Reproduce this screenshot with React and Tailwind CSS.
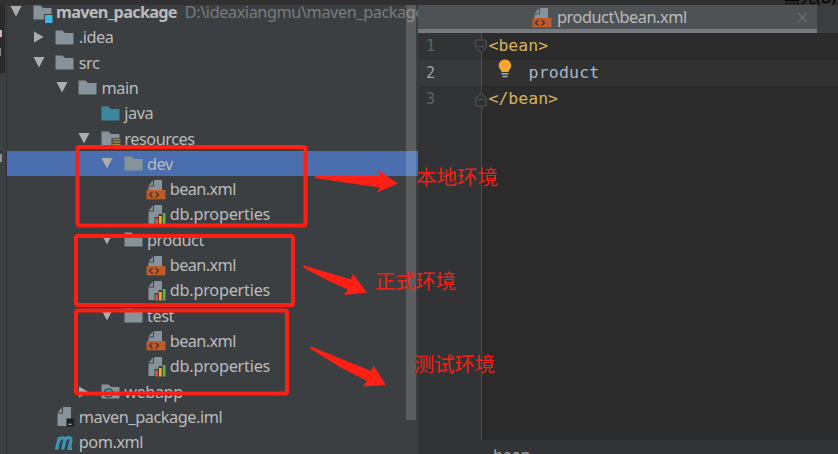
import React from 'react';

const TREE = [
  { level: 0, arrow: 'down', icon: 'module', label: 'maven_package', bold: true, hint: 'D:\\ideaxiangmu\\maven_package' },
  { level: 1, arrow: 'right', icon: 'folder', label: '.idea' },
  { level: 1, arrow: 'down', icon: 'folder', label: 'src' },
  { level: 2, arrow: 'down', icon: 'folder', label: 'main' },
  { level: 3, icon: 'source', label: 'java' },
  { level: 3, arrow: 'down', icon: 'resources', label: 'resources' },
  { level: 4, arrow: 'down', icon: 'folder', label: 'dev', selected: true },
  { level: 5, icon: 'xml', label: 'bean.xml' },
  { level: 5, icon: 'properties', label: 'db.properties' },
  { level: 4, arrow: 'down', icon: 'folder', label: 'product' },
  { level: 5, icon: 'xml', label: 'bean.xml' },
  { level: 5, icon: 'properties', label: 'db.properties' },
  { level: 4, arrow: 'down', icon: 'folder', label: 'test' },
  { level: 5, icon: 'xml', label: 'bean.xml' },
  { level: 5, icon: 'properties', label: 'db.properties' },
  { level: 3, arrow: 'right', icon: 'web', label: 'webapp' },
  { level: 1, icon: 'iml', label: 'maven_package.iml' },
  { level: 1, icon: 'maven', label: 'pom.xml' },
];

const CODE = [
  { text: '<bean>', tag: true, fold: 'start' },
  { text: 'product', active: true },
  { text: '</bean>', tag: true, fold: 'end' },
];

const Folder = ({ color = '#87939a' }) => (
  <path d="M0.5 3.500H7.5L10 6H18.5V17.500H0.5Z" fill={color} />
);

const Page = () => (
  <path d="M8 1H16V20H2.500V7.500H8Z M7 1.500V6.500H2.500Z" fill="#87939a" />
);

const FileIcon = ({ type }) => (
  <svg className="h-[21px] w-5 shrink-0" viewBox="0 0 20 21">
    {type === 'folder' && <Folder />}
    {type === 'source' && <Folder color="#3e86a0" />}
    {type === 'module' && (
      <>
        <Folder />
        <path d="M11 12H20V21H11Z" fill="#3c3f41" />
        <path d="M12 13H19.500V21H12Z" fill="#40b6e0" />
      </>
    )}
    {type === 'resources' && (
      <>
        <Folder />
        <path d="M10.500 10H20V19H10.500Z" fill="#3c3f41" />
        <path d="M11.500 11.500H19.500M11.500 14H19.500M11.500 16.500H19.500" stroke="#a88743" strokeWidth="1.700" />
      </>
    )}
    {type === 'web' && (
      <>
        <Folder />
        <circle cx="7.500" cy="12" r="4.800" fill="#3c3f41" />
        <circle cx="7.500" cy="12" r="3.500" fill="#40a5cf" />
      </>
    )}
    {type === 'xml' && (
      <>
        <Page />
        <path d="M0.500 11H19.500V20.300H0.500Z" fill="#bf5a2a" />
        <path d="M6.500 12.900L3.500 15.700L6.500 18.500M9.500 12.900L12.500 15.700L9.500 18.500" fill="none" stroke="#4b3027" strokeWidth="1.300" />
      </>
    )}
    {type === 'properties' && (
      <>
        <Page />
        <path d="M8.500 13H12.500V10H16V7.500H20V21H8.500Z" fill="#3c3f41" />
        <path d="M9.300 14.500H12V20.500H9.300Z" fill="#dd5b2b" />
        <path d="M13 12H15.700V20.500H13Z" fill="#f0a732" />
        <path d="M16.800 9H19.500V20.500H16.800Z" fill="#62b543" />
      </>
    )}
    {type === 'iml' && (
      <>
        <Page />
        <path d="M11.500 12.500H19V20.500H11.500Z" fill="#1e1f20" />
        <path d="M13.500 18.300H16.500" stroke="#b0b4b6" strokeWidth="1.200" />
      </>
    )}
    {type === 'maven' && (
      <path
        d="M4 5L1 17.500M3.500 8.500C5.500 5 9.800 5 9.200 8.500L7.200 17.500M9 8.500C11 5 16 4.500 15.400 8.500L13.800 16.300H16.500"
        transform="translate(0.500 0)"
        fill="none"
        stroke="#3f93b5"
        strokeWidth="3.300"
      />
    )}
  </svg>
);

const Arrow = ({ dir }) => (
  <svg className="h-3 w-3 shrink-0" viewBox="0 0 12 12">
    {dir === 'down' && <path d="M0.500 0H11.500L6 10.500Z" fill="#adadad" />}
    {dir === 'right' && <path d="M1 0.500L10.500 6L1 11.500Z" fill="#adadad" />}
  </svg>
);

const getLabelStyle = (item) => {
  if (item.bold) return 'font-bold tracking-[-0.72px]';
  if (item.icon === 'properties') return 'tracking-[-0.25px]';
  if (item.icon === 'xml') return 'tracking-[-0.6px]';
  return 'tracking-[-0.45px]';
};

const TreeRow = ({ item }) => (
  <div
    className={`flex h-[25.3px] shrink-0 items-center whitespace-nowrap ${item.selected ? 'bg-[#4b6eaf]' : ''}`}
    style={{ paddingLeft: 3 + item.level * 22.75 }}
  >
    <Arrow dir={item.arrow} />
    <span className="ml-[10.500px] flex">
      <FileIcon type={item.icon} />
    </span>
    <span className={`ml-[3.500px] text-[16.3px] leading-6 text-[#bbbbbb] ${getLabelStyle(item)}`}>
      {item.label}
    </span>
    {item.hint && (
      <span className="ml-[8px] text-[16.3px] leading-6 tracking-[-0.43px] text-[#797b7c]">{item.hint}</span>
    )}
  </div>
);

const ProjectTree = () => (
  <div className="relative flex w-[411px] shrink-0 flex-col overflow-hidden bg-[#3c3f41]">
    <div className="-mt-[5.600px] flex flex-col">
      {TREE.map((item, i) => (
        <TreeRow key={i} item={item} />
      ))}
    </div>
    {/* scrollbar thumb over the rows */}
    <div className="absolute top-0 right-[2px] h-[415px] w-[10px] bg-white/16" />
  </div>
);

const FoldMark = ({ type }) => (
  <svg className="h-[15px] w-3 shrink-0" viewBox="0 0 12 15">
    <path
      d={type === 'start' ? 'M0.800 1H11.200V9L6 13.500L0.800 9Z' : 'M0.800 14H11.200V6L6 1.500L0.800 6Z'}
      fill="#2f3031"
      stroke="#58595a"
    />
    <path d="M3 7.500H9" stroke="#58595a" />
  </svg>
);

const Bulb = () => (
  <svg className="mr-[17px] -mt-2 ml-[9px] h-5 w-[14px] shrink-0" viewBox="0 0 14 20">
    <path d="M7 0.500C3.300 0.500 0.700 3.200 0.700 6.500C0.700 9.500 3 10.800 3.700 13H10.300C11 10.800 13.300 9.500 13.300 6.500C13.300 3.200 10.700 0.500 7 0.500Z" fill="#f0a732" />
    <path d="M3.500 14.800H10.500M4.500 17.500H9.500" stroke="#a9adaf" strokeWidth="1.500" />
  </svg>
);

const CodeLine = ({ line, number }) => (
  <div className={`flex h-[26.600px] items-center ${line.active ? 'bg-white/[0.030]' : ''}`}>
    <span className={`w-[17px] text-right text-[15px] ${line.active ? 'text-[#a4a3a3]' : 'text-[#606366]'}`}>
      {number}
    </span>
    <span className="ml-[39.500px] flex w-[14px]">{line.fold && <FoldMark type={line.fold} />}</span>
    {line.active && <Bulb />}
    <span className={`text-[16.5px] ${line.tag ? 'text-[#d5b35f]' : 'tracking-[0.2px] text-[#a9b7c6]'}`}>{line.text}</span>
  </div>
);

const Editor = () => (
  <div className="flex min-w-0 flex-1 flex-col bg-[#2b2b2b]">
    <div className="flex h-[28px] shrink-0 bg-[#3c3f41]">
      <div className="flex w-[399px] items-center border-b-4 border-[#747a80] bg-[#4e5254] pl-[114px]">
        <FileIcon type="xml" />
        <span className="ml-[5px] flex-1 text-[16.3px] leading-6 tracking-[-0.45px] text-[#bbbbbb]">product\bean.xml</span>
        <svg className="mr-[10px] h-[9px] w-[9px]" viewBox="0 0 10 10">
          <path d="M0.500 0.500L9.500 9.500M9.500 0.500L0.500 9.500" stroke="#6e7375" strokeWidth="1.300" />
        </svg>
      </div>
    </div>
    <div className="flex-1 bg-[linear-gradient(90deg,#313335_63px,#4b4b4b_63px,#4b4b4b_64px,#2b2b2b_64px)] font-['DejaVu_Sans_Mono',monospace]">
      {CODE.map((line, i) => (
        <CodeLine key={i} line={line} number={i + 1} />
      ))}
    </div>
    <div className="h-[14px] shrink-0 overflow-hidden bg-[#313335] pt-[6px] pl-[75px] text-[16px] leading-[18px] text-[#a0a2a4]">
      bean
    </div>
  </div>
);

// Red boxes, arrows and captions laid over the window
const Annotations = () => (
  <>
    <svg className="absolute inset-0 h-full w-full" viewBox="0 0 838 454">
      <g fill="none" stroke="#ff2015" strokeWidth="4">
        <rect x="77.500" y="147" width="228" height="78.500" rx="2" />
        <rect x="76" y="236" width="217" height="69" rx="2" />
        <rect x="76" y="310.500" width="211" height="83" rx="2" />
      </g>
      <g fill="#ff2015">
        <path d="M315 176L379.500 176L378 170L398 183.500L377 192.500L380 187.500L348 183L315 178Z" />
        <path d="M304 265.500L351 279.500L353 274L367 292.500L344 295L348 289.500L330 281.500L303 267.500Z" />
        <path d="M311 346.500L371 371L373.500 365.500L386 385L363 386.500L367 381L340 367L310 348.500Z" />
      </g>
    </svg>
    <span className="absolute top-[163px] left-[416px] text-[20.5px] leading-7 text-[#f02218]">本地环境</span>
    <span className="absolute top-[267px] left-[375px] text-[20.3px] leading-7 text-[#f02218]">正式环境</span>
    <span className="absolute top-[350px] left-[414px] text-[20.3px] leading-7 text-[#f02218]">测试环境</span>
  </>
);

const App = () => (
  <div className="relative flex h-[454px] w-[838px] flex-col overflow-hidden bg-[#313131] font-['Noto_Sans','Noto_Sans_CJK_SC',sans-serif]">
    <div className="flex h-[5px] shrink-0 justify-end overflow-hidden">
      <span className="-mt-[13px] w-[54px] text-[16px] leading-5 whitespace-nowrap text-black">黑亮(B)</span>
    </div>
    <div className="flex min-h-0 flex-1">
      <div className="flex w-[7px] shrink-0 flex-col border-r border-[#323232] bg-[#3c3f41]">
        <div className="h-[68px] w-[5px] bg-[#2b2b2b] pt-[25px]">
          <div className="h-[7px] w-[2px] bg-[#d0b5b3]" />
          <div className="mt-[11px] h-[8px] w-px bg-[#8a8a8a]" />
        </div>
        <div className="mt-[81px] h-[8px] w-[2px] bg-[#8f8f8f]" />
      </div>
      <ProjectTree />
      <Editor />
    </div>
    <Annotations />
  </div>
);

export default App;
